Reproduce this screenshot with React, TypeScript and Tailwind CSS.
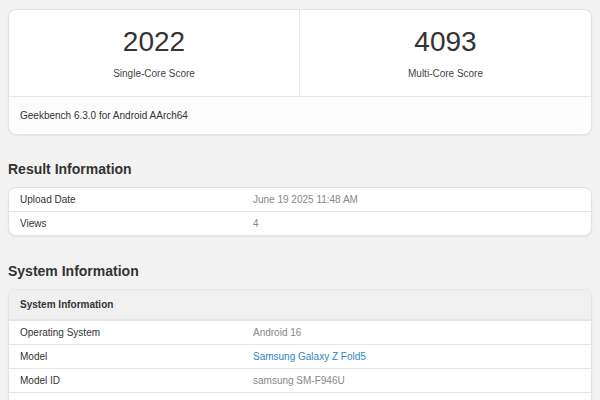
const font = { fontFamily: '"Liberation Sans", Arial, sans-serif' };

interface Row {
  label: string;
  value: string;
  link?: boolean;
}

const resultRows: Row[] = [
  { label: "Upload Date", value: "June 19 2025 11:48 AM" },
  { label: "Views", value: "4" },
];

const systemRows: Row[] = [
  { label: "Operating System", value: "Android 16" },
  { label: "Model", value: "Samsung Galaxy Z Fold5", link: true },
  { label: "Model ID", value: "samsung SM-F946U" },
];

function InfoRow({ row }: { row: Row }) {
  return (
    <div className="flex h-[24px] items-center border-t border-[#e6e6e6] first:h-[23px] first:border-t-0 px-[11px] text-[10px]">
      <div className="w-[233px] text-[#333]">{row.label}</div>
      <div className={row.link ? "text-[#2e86c1]" : "text-[#888]"}>{row.value}</div>
    </div>
  );
}

export default function App() {
  return (
    <div className="h-[400px] overflow-hidden bg-[#f2f2f2] px-2 pt-[9px]" style={font}>
      <div className="rounded-lg border border-[#e3e3e3] bg-white shadow-[0_1px_2px_rgba(0,0,0,0.06)]">
        <div className="grid h-[87px] grid-cols-2 border-b border-[#e6e6e6]">
          <div className="flex flex-col items-center border-r border-[#e6e6e6] pt-[16px]">
            <div className="text-[28px] leading-[32px] text-[#333]">2022</div>
            <div className="mt-[8px] text-[10px] text-[#444]">Single-Core Score</div>
          </div>
          <div className="flex flex-col items-center pt-[16px]">
            <div className="text-[28px] leading-[32px] text-[#333]">4093</div>
            <div className="mt-[8px] text-[10px] text-[#444]">Multi-Core Score</div>
          </div>
        </div>
        <div className="flex h-[37px] items-center rounded-b-lg bg-[#fcfcfc] px-[11px] text-[10px] text-[#333]">
          Geekbench 6.3.0 for Android AArch64
        </div>
      </div>

      <h2 className="mt-[25px] text-[14px] font-bold leading-[18px] text-[#333]">Result Information</h2>
      <div className="mt-[9px] rounded-lg border border-[#e3e3e3] bg-white shadow-[0_1px_2px_rgba(0,0,0,0.06)]">
        {resultRows.map((row) => (
          <InfoRow key={row.label} row={row} />
        ))}
      </div>

      <h2 className="mt-[26px] text-[14px] font-bold leading-[18px] text-[#333]">System Information</h2>
      <div className="mt-[9px] rounded-lg border border-[#e3e3e3] bg-white shadow-[0_1px_2px_rgba(0,0,0,0.06)]">
        <div className="flex h-[30px] items-center rounded-t-lg border-b border-[#e6e6e6] bg-[#f0f0f0] px-[11px] text-[10px] font-bold text-[#333]">
          System Information
        </div>
        {systemRows.map((row) => (
          <InfoRow key={row.label} row={row} />
        ))}
        <div className="h-[24px] border-t border-[#e6e6e6]" />
      </div>
    </div>
  );
}
